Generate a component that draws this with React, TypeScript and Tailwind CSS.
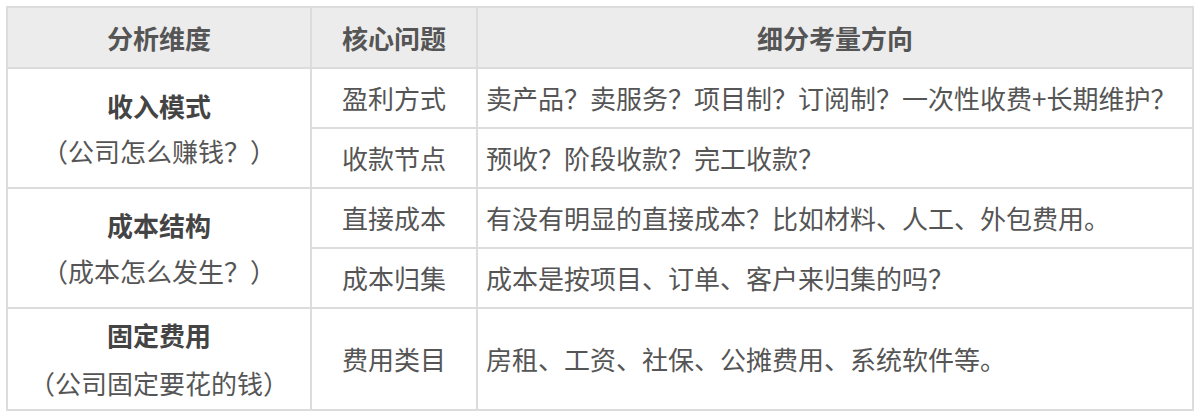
import React from "react";

const font = { fontFamily: '"Noto Sans CJK SC", "Noto Sans", sans-serif' };

export default function App() {
  const td = "border-2 border-[#dcdcdc] text-[26px] text-[#555555] leading-none";
  const title = (t: string, s: string, gap: string) => (
    <div className="flex flex-col items-center">
      <div className={`font-bold text-[#444444] ${gap}`}>{t}</div>
      <div className={gap}>{s}</div>
    </div>
  );
  return (
    <div className="w-[1200px] h-[420px] bg-white pt-[6px] pl-[6px]" style={font}>
      <table className="border-collapse w-[1188px] table-fixed">
        <colgroup>
          <col className="w-[304px]" />
          <col className="w-[166px]" />
          <col />
        </colgroup>
        <thead>
          <tr className="h-[61px] bg-[#ececec]">
            <th className={`${td} font-bold text-[#444444] text-center`}>分析维度</th>
            <th className={`${td} font-bold text-[#444444] text-center`}>核心问题</th>
            <th className={`${td} font-bold text-[#444444] text-center`}>细分考量方向</th>
          </tr>
        </thead>
        <tbody>
          <tr className="h-[60px]">
            <td rowSpan={2} className={`${td} text-center`}>{title("收入模式", "（公司怎么赚钱？）", "leading-[45px]")}</td>
            <td className={`${td} text-center`}>盈利方式</td>
            <td className={`${td} px-[8px]`}>卖产品？卖服务？项目制？订阅制？一次性收费+长期维护？</td>
          </tr>
          <tr className="h-[60px]">
            <td className={`${td} text-center`}>收款节点</td>
            <td className={`${td} px-[8px]`}>预收？阶段收款？完工收款？</td>
          </tr>
          <tr className="h-[60px]">
            <td rowSpan={2} className={`${td} text-center`}>{title("成本结构", "（成本怎么发生？）", "leading-[46px]")}</td>
            <td className={`${td} text-center`}>直接成本</td>
            <td className={`${td} px-[8px]`}>有没有明显的直接成本？比如材料、人工、外包费用。</td>
          </tr>
          <tr className="h-[60px]">
            <td className={`${td} text-center`}>成本归集</td>
            <td className={`${td} px-[8px]`}>成本是按项目、订单、客户来归集的吗？</td>
          </tr>
          <tr className="h-[102px]">
            <td className={`${td} text-center`}>{title("固定费用", "（公司固定要花的钱）", "leading-[48px]")}</td>
            <td className={`${td} text-center`}>费用类目</td>
            <td className={`${td} px-[8px]`}>房租、工资、社保、公摊费用、系统软件等。</td>
          </tr>
        </tbody>
      </table>
    </div>
  );
}
